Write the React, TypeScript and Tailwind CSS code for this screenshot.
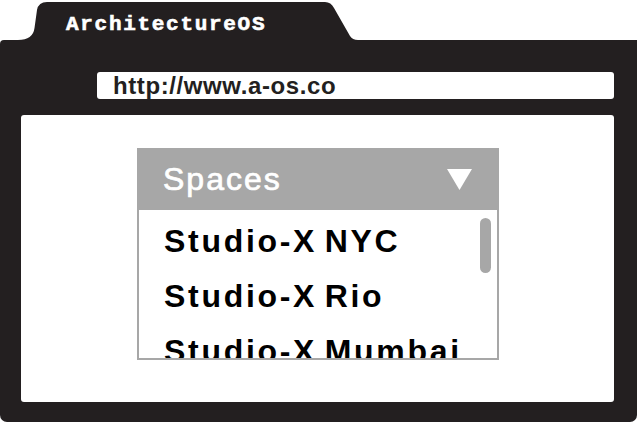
const spaces = ["Studio-X NYC", "Studio-X Rio", "Studio-X Mumbai"];

function FolderTab() {
  return (
    <svg
      className="absolute left-0 top-0"
      width="380"
      height="42"
      viewBox="0 0 380 42"
      aria-hidden="true"
    >
      <path
        d="M10 42 L10 40 L18 40 Q33 40 34.5 28 L37 10 Q38.5 2 47 2 L325 2 Q331 2 334 8 L350 36 Q352.5 40 358 40 L380 40 L380 42 Z"
        fill="#231f20"
      />
    </svg>
  );
}

export default function App() {
  return (
    <div className="h-[422px] w-[637px] overflow-hidden bg-white">
      <div className="relative h-[40px] pl-[66px] pt-[14px]">
        <FolderTab />
        <span
          className="relative block text-[21px] font-bold leading-none tracking-[1.7px] text-white [-webkit-text-stroke:0.6px_white]"
          style={{ fontFamily: '"Liberation Mono", monospace' }}
        >
          ArchitectureOS
        </span>
      </div>

      <div className="flex h-[382px] flex-col rounded-tl-[4px] rounded-b-[7px] bg-[#231f20] pt-[32px]">
        <div className="ml-[97px] mr-[23px] h-[27px] rounded-[3px] bg-white pl-[16px]">
          <span
            className="text-[24px] font-bold leading-[27px] tracking-[0.6px] text-[#231f20]"
            style={{ fontFamily: '"Liberation Sans", Arial, sans-serif' }}
          >
            http://www.a-os.co
          </span>
        </div>

        <div
          className="ml-[21px] mr-[23px] mt-[16px] h-[287px] rounded-[3px] bg-white pl-[116px] pt-[33px]"
          style={{ fontFamily: '"Liberation Sans", Arial, sans-serif' }}
        >
          <div className="w-[362px]">
            <div className="flex h-[62px] items-center justify-between bg-[#a7a7a7] pl-[26px] pr-[27px]">
              <span className="text-[32px] font-normal leading-none tracking-[2px] text-white [-webkit-text-stroke:0.7px_white]">
                Spaces
              </span>
              <svg width="25" height="21" viewBox="0 0 25 21" aria-hidden="true">
                <polygon points="0,0 25,0 12.5,21" fill="#ffffff" />
              </svg>
            </div>
            <div className="relative h-[150px] overflow-hidden border-x-2 border-b-2 border-[#a7a7a7] pl-[25px] pt-[4px]">
              {spaces.map((name) => (
                <div
                  key={name}
                  className="whitespace-nowrap text-[32px] font-bold leading-[55px] tracking-[2.7px] text-black [word-spacing:-4px]"
                >
                  {name}
                </div>
              ))}
              <div className="absolute right-[6px] top-[8px] h-[55px] w-[11px] rounded-full bg-[#a7a7a7]" />
            </div>
          </div>
        </div>
      </div>
    </div>
  );
}
